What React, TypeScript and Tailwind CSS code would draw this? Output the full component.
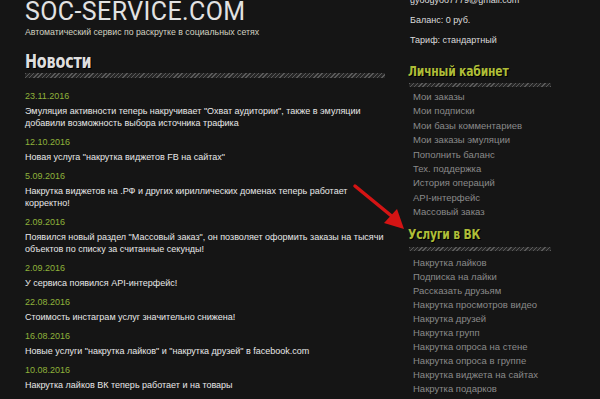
import React from "react";

type NewsItem = { date: string; lines: string[] };

const news: NewsItem[] = [
  {
    date: "23.11.2016",
    lines: [
      "Эмуляция активности теперь накручивает \"Охват аудитории\", также в эмуляции",
      "добавили возможность выбора источника трафика",
    ],
  },
  { date: "12.10.2016", lines: ["Новая услуга \"накрутка виджетов FB на сайтах\""] },
  {
    date: "5.09.2016",
    lines: [
      "Накрутка виджетов на .РФ и других кириллических доменах теперь работает",
      "корректно!",
    ],
  },
  {
    date: "2.09.2016",
    lines: [
      "Появился новый раздел \"Массовый заказ\", он позволяет оформить заказы на тысячи",
      "объектов по списку за считанные секунды!",
    ],
  },
  { date: "2.09.2016", lines: ["У сервиса появился API-интерфейс!"] },
  { date: "22.08.2016", lines: ["Стоимость инстаграм услуг значительно снижена!"] },
  { date: "16.08.2016", lines: ["Новые услуги \"накрутка лайков\" и \"накрутка друзей\" в facebook.com"] },
  { date: "10.08.2016", lines: ["Накрутка лайков ВК теперь работает и на товары"] },
];

const cabinet = [
  "Мои заказы",
  "Мои подписки",
  "Мои базы комментариев",
  "Мои заказы эмуляции",
  "Пополнить баланс",
  "Тех. поддержка",
  "История операций",
  "API-интерфейс",
  "Массовый заказ",
];

const vk = [
  "Накрутка лайков",
  "Подписка на лайки",
  "Рассказать друзьям",
  "Накрутка просмотров видео",
  "Накрутка друзей",
  "Накрутка групп",
  "Накрутка опроса на стене",
  "Накрутка опроса в группе",
  "Накрутка виджета на сайтах",
  "Накрутка подарков",
];

// diagonal hatch used under every block title
const Hatch = ({ className }: { className: string }) => (
  <div
    className={`bg-[repeating-linear-gradient(135deg,#5a5a5a_0px,#5a5a5a_1px,#262626_1px,#262626_3px)] ${className}`}
  />
);

const SideTitle = ({ children, className }: { children: React.ReactNode; className: string }) => (
  <h2
    className={`origin-left scale-y-[1.2] font-['DejaVu_Sans_Condensed','DejaVu_Sans',sans-serif] font-bold text-[12px] leading-[18px] text-[#aebd38] tracking-[-0.2px] [text-shadow:1px_1px_0_#000] ${className}`}
  >
    {children}
  </h2>
);

export default function App() {
  return (
    <div className="relative w-[600px] h-[399px] overflow-hidden bg-[#151515] font-['Liberation_Sans',Arial,sans-serif]">
      <div className="flex pl-[25px]">
        {/* main column */}
        <div className="w-[362px] -mt-[3px]">
          <div className="font-['Roboto',sans-serif] text-[25px] leading-[29px] text-[#e2e2e2] tracking-[0.4px]">
            SOC-SERVICE.COM
          </div>
          <div className="text-[8.75px] leading-[12px] text-[#d3d3c2]">
            Автоматический сервис по раскрутке в социальных сетях
          </div>
          <h1 className="mt-[14px] origin-left scale-y-[1.2] font-['DejaVu_Sans_Condensed','DejaVu_Sans',sans-serif] font-bold text-[16px] leading-[20px] text-[#dedede] tracking-[-0.2px] [text-shadow:1px_1px_0_#000]">
            Новости
          </h1>
          <Hatch className="mt-[1px] h-[5px] w-[360px]" />
          <div className="mt-[11px]">
            {news.map((n, i) => (
              <div key={i} className="mb-[6px]">
                <div className="text-[9px] leading-[14px] mb-[2px] text-[#8fb23a]">{n.date}</div>
                {n.lines.map((l, j) => (
                  <div key={j} className="text-[9px] leading-[12px] text-[#e8e8e8] whitespace-nowrap">
                    {l}
                  </div>
                ))}
              </div>
            ))}
          </div>
        </div>

        {/* sidebar */}
        <div className="ml-[21px] w-[160px] -mt-[10px]">
          <div className="pl-[2px] text-[9px] text-[#dcdcdc]">
            <div className="leading-[20px]">gyoogyoo7779@gmail.com</div>
            <div className="leading-[20px]">Баланс: 0 руб.</div>
            <div className="leading-[20px]">Тариф: стандартный</div>
          </div>
          <SideTitle className="mt-[12px]">Личный кабинет</SideTitle>
          <Hatch className="mt-[3px] h-[4px] w-[142px] ml-[1px]" />
          <ul className="mt-[3px] pl-[5px]">
            {cabinet.map((c) => (
              <li key={c} className="text-[9.5px] leading-[14.4px] text-[#8a8a8a]">
                {c}
              </li>
            ))}
          </ul>
          <SideTitle className="mt-[5px]">Услуги в ВК</SideTitle>
          <Hatch className="mt-[4px] h-[4px] w-[142px] ml-[1px]" />
          <ul className="mt-[5px] pl-[5px]">
            {vk.map((c) => (
              <li key={c} className="text-[9.5px] leading-[14px] text-[#8a8a8a]">
                {c}
              </li>
            ))}
          </ul>
        </div>
      </div>

      {/* red arrow pointing at the VK block */}
      <svg className="absolute left-[350px] top-[182px]" width="60" height="52" viewBox="0 0 60 52">
        <line x1="5" y1="4" x2="44" y2="36" stroke="#d41414" strokeWidth="3.5" strokeLinecap="round" />
        <polygon points="54,47 34,41 47,27" fill="#d41414" />
      </svg>
    </div>
  );
}
